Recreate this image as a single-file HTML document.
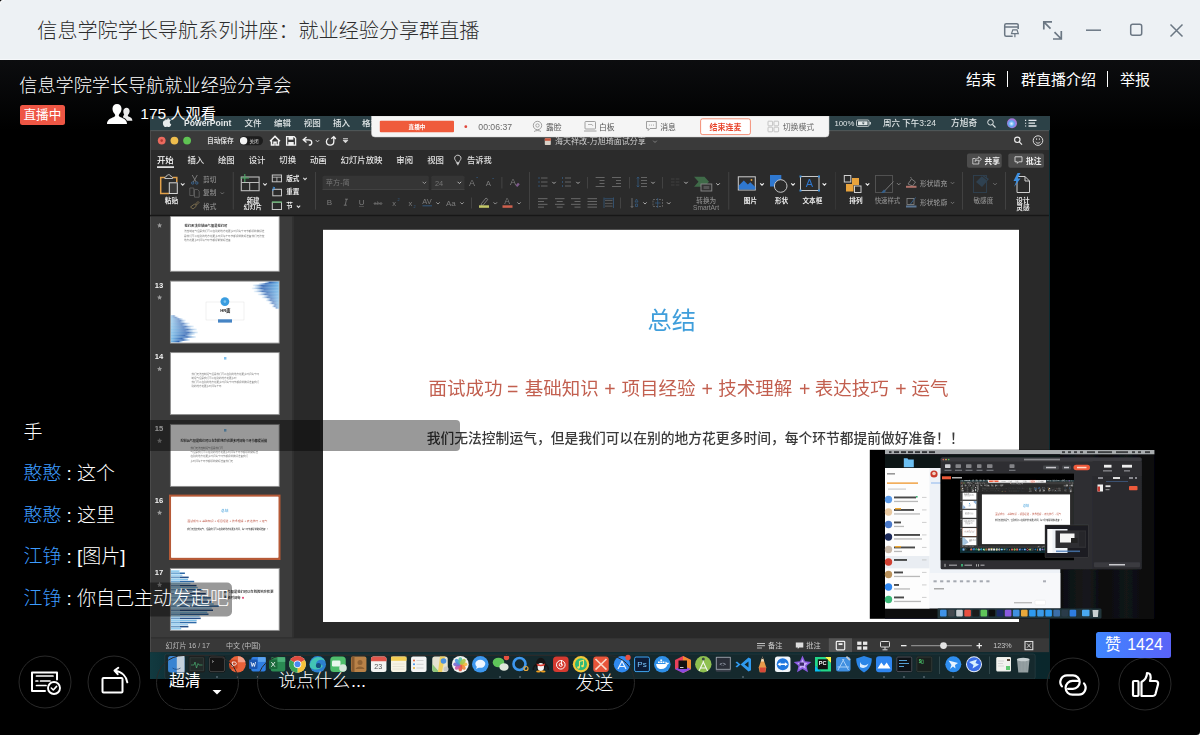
<!DOCTYPE html>
<html lang="zh"><head><meta charset="utf-8"><title>群直播</title>
<style>
html,body{margin:0;padding:0}
body{width:1200px;height:735px;overflow:hidden;position:relative;background:#000;font-family:"Liberation Sans",sans-serif}
#tb{position:absolute;left:0;top:0;width:1200px;height:60px;background:#edf1f4;box-shadow:inset 0 -1px 0 #f6f8fa}
#shade{position:absolute;left:0;top:60px;width:1200px;height:70px;background:linear-gradient(#0c0d0f,#000)}
#video{position:absolute;left:150px;top:116px;width:900px;height:563px;overflow:hidden;background:#0b2a30}
#video svg{display:block;filter:blur(.55px)}
#ui{position:absolute;left:0;top:0}
svg text{font-family:"Liberation Sans","Noto Sans CJK SC",sans-serif}
.sr{position:absolute;left:0;top:0;width:1px;height:1px;overflow:hidden;opacity:0;clip-path:inset(50%);white-space:nowrap;font-size:1px}
</style></head><body>
<div id="tb"></div><div id="shade"></div>
<div class="sr">
<h1>信息学院学长导航系列讲座：就业经验分享群直播</h1>
<h2>信息学院学长导航就业经验分享会</h2>
<p>直播中 · 175 人观看 · 结束 | 群直播介绍 | 举报</p>
<p>总结</p><p>面试成功 = 基础知识 + 项目经验 + 技术理解 + 表达技巧 + 运气</p>
<p>我们无法控制运气，但是我们可以在别的地方花更多时间，每个环节都提前做好准备！！</p>
<ul><li>手</li><li>憨憨 : 这个</li><li>憨憨 : 这里</li><li>江铮 : [图片]</li><li>江铮 : 你自己主动发起吧</li></ul>
<p>超清 · 说点什么... · 发送 · 赞 1424</p>
</div>
<div id="video"><svg width="900" height="563" viewBox="0 0 900 563"><g transform="translate(-150,-116)"><g id="vg"><rect x="150" y="116" width="900" height="563" fill="#0b2a30"/><rect x="150" y="116" width="900" height="14.3" fill="#2c4147"/><path d="M167.200 119.800c.9 0 1.700-.7 1.700-1.900-1 .1-1.800.9-1.700 1.900zM165.300 120.300c-1.400 0-2.400 1.200-2.400 3 0 1.900 1.300 3.800 2.300 3.800.7 0 1-.4 1.900-.4s1.100.4 1.900.4c1 0 1.900-1.500 2.300-2.600-1-.4-1.500-1.200-1.500-2.200 0-.9.500-1.600 1.200-2-.6-.8-1.400-1.100-2.100-1.100-.9 0-1.400.5-1.900.5s-1-.4-1.700-.4z" fill="#e8eced"/>
<text x="184" y="126.48" font-size="8.6" font-weight="700" fill="#e6eaeb">PowerPoint</text>
<text x="244.5" y="126.44" font-size="8.5" font-weight="500" fill="#dfe5e6">文件</text>
<text x="274" y="126.44" font-size="8.5" font-weight="500" fill="#dfe5e6">编辑</text>
<text x="303.7" y="126.44" font-size="8.5" font-weight="500" fill="#dfe5e6">视图</text>
<text x="333" y="126.44" font-size="8.5" font-weight="500" fill="#dfe5e6">插入</text>
<text x="362" y="126.44" font-size="8.5" font-weight="500" fill="#dfe5e6">格式</text>
<text x="834.4" y="126.09" font-size="7.8" font-weight="500" fill="#dfe5e6">100%</text>
<rect x="856.500" y="120" width="12.500" height="6.400" rx="1.200" fill="none" stroke="#dfe5e6" stroke-width=".8"/><rect x="858" y="121.300" width="9.500" height="3.800" fill="#dfe5e6"/><rect x="869.600" y="122" width="1.200" height="2.500" fill="#dfe5e6"/><path d="M863.500 121l-1.500 2.500h1.500l-1 2 2.200-2.800h-1.500z" fill="#2c4147"/>
<text x="883" y="126.34" font-size="8.5" font-weight="500" fill="#dfe5e6">周六 下午3:24</text>
<text x="951" y="126.42" font-size="8.7" font-weight="500" fill="#dfe5e6">方旭奇</text>
<circle cx="990.500" cy="122.300" r="2.800" fill="none" stroke="#dfe5e6" stroke-width="1"/><path d="M992.500 124.500l3 3" stroke="#dfe5e6" stroke-width="1.100"/><defs><radialGradient id="siri" cx=".45" cy=".55" r=".6"><stop offset="0" stop-color="#e9f6ff"/><stop offset=".45" stop-color="#5aa8f0"/><stop offset=".8" stop-color="#b56fd8"/><stop offset="1" stop-color="#7a86c8"/></radialGradient></defs><circle cx="1012" cy="123.200" r="5" fill="url(#siri)"/><path d="M1028.500 120.400h8M1028.500 123.200h6.500M1028.500 126h8" stroke="#e6ecee" stroke-width="1.300"/><path d="M1025 120.400h1.200M1025 123.200h1.200M1025 126h1.200" stroke="#e6ecee" stroke-width="1.100"/><rect x="150" y="130.300" width="899" height="522" fill="#2b2b2b"/><rect x="150" y="130.300" width="899" height="19.700" fill="#3a3a3a"/><rect x="150" y="130.300" width="899" height=".8" fill="#5a6466"/><rect x="150" y="130.300" width="1" height="522" fill="#4a4a4a"/><circle cx="161.700" cy="140.600" r="3.900" fill="#ec6a5e"/><circle cx="161.700" cy="140.600" r="1.300" fill="#b03a30"/><circle cx="174.400" cy="140.600" r="3.900" fill="#f0bd4d"/><circle cx="187.100" cy="140.600" r="3.900" fill="#5fc353"/>
<text x="207" y="143.28" font-size="6.7" font-weight="700" fill="#d8d8d8">自动保存</text>
<rect x="239.400" y="136.200" width="23.600" height="9" rx="4.500" fill="#1c1c1c"/><circle cx="243.600" cy="140.700" r="3.700" fill="#f4f4f4"/>
<text x="249.5" y="142.5" font-size="4.6" font-weight="500" fill="#bbb">关闭</text>
<path d="M270 141.200l5-4.800 5 4.800M271.500 140.500v4.500h2.500v-2.800h2v2.800h2.500v-4.500" fill="none" stroke="#f2f2f2" stroke-width="1.500"/><path d="M286.600 136.700h7.500l1.500 1.500v7h-9z" fill="none" stroke="#f2f2f2" stroke-width="1.300"/><rect x="288.500" y="136.700" width="4.800" height="3" fill="#f2f2f2"/><rect x="288.300" y="142" width="5.400" height="3.200" fill="#f2f2f2"/><path d="M306.500 137l-3.300 2.800 3.300 2.800M303.500 139.800h5c2.200 0 3.300 1.300 3.300 2.700 0 1.500-1.200 2.700-3 2.700" fill="none" stroke="#f2f2f2" stroke-width="1.300"/><path d="M315.8 140.15l1.700 1.700l1.700 -1.700" fill="none" stroke="#ccc" stroke-width="1"/><path d="M333.800 137.200v4.300c0 2.300-1.600 3.700-3.700 3.700s-3.700-1.500-3.700-3.600c0-1.600.9-2.800 2-3.400M331.300 138.800l2.500-2.200 2 2.400" fill="none" stroke="#f2f2f2" stroke-width="1.300"/><path d="M343 138.700h5M343.200 140.300h4.600l-2.300 2.500z" stroke="#ddd" stroke-width=".9" fill="#ddd"/><rect x="544.800" y="138.300" width="6" height="6.800" rx=".8" fill="#d9d2c8"/><rect x="544.800" y="138.300" width="6" height="2.500" fill="#c8553d"/>
<text x="555" y="144.26" font-size="8" fill="#cfcfcf">海天祥改-万旭琦面试分享</text>
<path d="M653.2 140.7l1.8 1.8l1.8 -1.8" fill="none" stroke="#888" stroke-width="0.9"/><circle cx="1017.300" cy="139.800" r="2.700" fill="none" stroke="#eee" stroke-width="1.100"/><path d="M1019.300 141.900l2.700 2.700" stroke="#eee" stroke-width="1.200"/><circle cx="1038" cy="140.600" r="4.800" fill="none" stroke="#ddd" stroke-width="1"/><path d="M1035.700 142c1.200 1.600 3.400 1.600 4.600 0" fill="none" stroke="#ddd" stroke-width=".9"/><path d="M1036.600 138.300v1.600M1039.400 138.300v1.600" stroke="#ddd" stroke-width=".9"/>
<text x="157" y="163.41" font-size="8.4" font-weight="500" fill="#fff">开始</text>
<text x="187.5" y="163.41" font-size="8.4" font-weight="500" fill="#e2e2e2">插入</text>
<text x="218" y="163.41" font-size="8.4" font-weight="500" fill="#e2e2e2">绘图</text>
<text x="248.7" y="163.41" font-size="8.4" font-weight="500" fill="#e2e2e2">设计</text>
<text x="279.3" y="163.41" font-size="8.4" font-weight="500" fill="#e2e2e2">切换</text>
<text x="310" y="163.41" font-size="8.4" font-weight="500" fill="#e2e2e2">动画</text>
<text x="340.6" y="163.41" font-size="8.4" font-weight="500" fill="#e2e2e2">幻灯片放映</text>
<text x="396.3" y="163.41" font-size="8.4" font-weight="500" fill="#e2e2e2">审阅</text>
<text x="427.2" y="163.41" font-size="8.4" font-weight="500" fill="#e2e2e2">视图</text>
<rect x="157" y="166.300" width="17" height="1.600" fill="#f2f2f2"/><path d="M457.800 155.200c1.900 0 3.200 1.400 3.200 3 0 1.200-.7 1.900-1.200 2.600-.4.500-.5 1-.5 1.600h-3c0-.6-.1-1.100-.5-1.600-.5-.7-1.200-1.400-1.200-2.600 0-1.600 1.300-3 3.200-3zM456.500 163.500h2.600M457 164.700h1.600" fill="none" stroke="#ddd" stroke-width=".9"/>
<text x="467" y="163.33" font-size="8.2" font-weight="500" fill="#e2e2e2">告诉我</text>
<rect x="967" y="153.400" width="34.700" height="14.400" rx="2" fill="#4c4c4c"/><rect x="1008.300" y="153.400" width="35.700" height="14.400" rx="2" fill="#4c4c4c"/><path d="M975.500 158.500h-2.700v5.500h6v-2M975 161.500c.3-2 1.500-3.300 3.700-3.300v-1.500l2.800 2.500-2.800 2.500v-1.500c-1.600 0-2.800.3-3.700 1.300z" fill="none" stroke="#ddd" stroke-width=".8"/>
<text x="984.5" y="163.55" font-size="7.7" font-weight="700" fill="#f0f0f0">共享</text>
<path d="M1015 156.800h7v5h-3.300l-1.400 1.600v-1.600h-2.300z" fill="none" stroke="#ddd" stroke-width=".9"/>
<text x="1026" y="163.55" font-size="7.7" font-weight="700" fill="#f0f0f0">批注</text>
<path d="M165 177.500h-4.300v16h8.500M172.500 177.500h4.300v4.500" fill="none" stroke="#e2a14a" stroke-width="1.500"/><path d="M164.800 178.500c0-1.500 1-2.300 2-2.300 0-1 .9-1.500 1.900-1.500s1.900.5 1.900 1.500c1 0 2 .8 2 2.300z" fill="none" stroke="#d0d0d0" stroke-width=".9"/><rect x="169.300" y="182.800" width="8" height="10.700" fill="#3a3a3a" stroke="#d6d6d6" stroke-width="1"/><path d="M180.89999999999998 183.29999999999998l1.8 1.8l1.8 -1.8" fill="none" stroke="#ddd" stroke-width="1.1"/>
<text x="164.8" y="202.74" font-size="6.6" font-weight="700" fill="#ededed">粘贴</text>
<path d="M192.200 175l4 7M197.300 175l-4 7" stroke="#8a8a8a" stroke-width=".8"/><circle cx="192.700" cy="183" r="1.200" fill="none" stroke="#3f6f9f" stroke-width=".8"/><circle cx="196.800" cy="183" r="1.200" fill="none" stroke="#3f6f9f" stroke-width=".8"/>
<text x="203" y="181.68" font-size="6.7" font-weight="500" fill="#8f8f8f">剪切</text>
<path d="M189.800 188h4v7.500h-4zM194.500 189.500h3l1.700 1.700v6h-4.700z" fill="none" stroke="#666" stroke-width=".8"/>
<text x="203" y="195.38" font-size="6.7" font-weight="500" fill="#8f8f8f">复制</text>
<path d="M220.70000000000002 192.39999999999998l1.6 1.6l1.6 -1.6" fill="none" stroke="#777" stroke-width="0.9"/><path d="M190.500 207l4-3 2 2-3.500 3zM195.500 204l2.500-2.500 1 1-2.500 2.500z" fill="none" stroke="#8a7a55" stroke-width=".8"/>
<text x="203" y="209.08" font-size="6.7" font-weight="500" fill="#8f8f8f">格式</text>
<rect x="232.79999999999998" y="172" width=".8" height="37.600" fill="#484848"/><rect x="241.300" y="177" width="17.800" height="13.700" fill="none" stroke="#bdbdbd" stroke-width="1.100"/><path d="M241.300 182.500h17.800M249.700 182.500v8.200" stroke="#bdbdbd" stroke-width="1"/><path d="M244.800 174v8M240.600 178h8.400" stroke="#4aa564" stroke-width="1.100"/><path d="M263.2 183.29999999999998l1.8 1.8l1.8 -1.8" fill="none" stroke="#ddd" stroke-width="1.1"/>
<text x="246.7" y="202.87" font-size="6.4" font-weight="700" fill="#ededed">新建</text>
<text x="243.5" y="209.49" font-size="6.2" font-weight="700" fill="#ededed">幻灯片</text>
<rect x="272.300" y="175" width="9.200" height="6.800" fill="none" stroke="#c8c8c8" stroke-width="1"/><path d="M272.300 177.200h9.200M276.900 177.200v4.600" stroke="#c8c8c8" stroke-width=".8"/>
<text x="286.2" y="181.04" font-size="6.6" font-weight="700" fill="#ededed">版式</text>
<path d="M303.3 177.95000000000002l1.700 1.7l1.7 -1.7" fill="none" stroke="#ddd" stroke-width="1.1"/><rect x="272.800" y="189.300" width="8.700" height="6.500" fill="none" stroke="#c8c8c8" stroke-width="1"/><path d="M274.500 187.500c-1.500.5-2 2-1.500 3.500M274.500 187.500l-.3 1.800M274.500 187.500l-1.700-.3" stroke="#3f8fd8" stroke-width=".9" fill="none"/>
<text x="286.2" y="194.14" font-size="6.6" font-weight="700" fill="#ededed">重置</text>
<rect x="272.300" y="202.300" width="9.200" height="7.200" fill="none" stroke="#c8c8c8" stroke-width="1"/><rect x="272" y="201.400" width="9.800" height="1.300" fill="#5fae6a"/>
<text x="286.2" y="208.44" font-size="6.6" font-weight="700" fill="#ededed">节</text>
<path d="M296.8 205.65l1.7 1.7l1.7 -1.7" fill="none" stroke="#ddd" stroke-width="1.1"/><rect x="315.20000000000005" y="172" width=".8" height="37.600" fill="#484848"/><rect x="322.500" y="175.800" width="106.300" height="13.800" rx="1.500" fill="#353535"/><rect x="322.500" y="189" width="106.300" height=".7" fill="#4a4a4a"/>
<text x="325.8" y="185.46" font-size="7.2" fill="#767676">苹方-简</text>
<path d="M422.59999999999997 181.79999999999998l1.8 1.8l1.8 -1.8" fill="none" stroke="#999" stroke-width="1"/><rect x="431.300" y="175.800" width="33.200" height="13.800" rx="1.500" fill="#353535"/><rect x="431.300" y="189" width="33.200" height=".7" fill="#4a4a4a"/>
<text x="435" y="185.64" font-size="7.4" fill="#767676">24</text>
<path d="M457.59999999999997 181.79999999999998l1.8 1.8l1.8 -1.8" fill="none" stroke="#bbb" stroke-width="1"/>
<text x="469" y="185.83" font-size="9" fill="#7d7d7d">A</text>
<text x="485.8" y="185.89" font-size="7.8" fill="#7d7d7d">A</text>
<path d="M476.300 178l.8-.8.800.8" stroke="#355f88" fill="none" stroke-width=".7"/><path d="M492.300 178l.8.800.800-.8" stroke="#355f88" fill="none" stroke-width=".7"/><rect x="501.500" y="177" width=".8" height="11.500" fill="#4a4a4a"/>
<text x="510" y="185.33" font-size="9" fill="#7d7d7d">A</text>
<path d="M515.500 185.500l2.500-2.800 1.800 1.600-2.500 2.800z" fill="#7d5a8a"/>
<text x="326.8" y="205.26" font-size="8" font-weight="500" fill="#7d7d7d">B</text>
<path d="M346.500 199.200l-1.300 6M345 199.200h3M343.800 205.200h3" stroke="#7d7d7d" stroke-width=".8"/>
<text x="358.7" y="205.26" font-size="8" fill="#7d7d7d">U</text>
<rect x="359" y="206.300" width="5" height=".6" fill="#666"/>
<text x="373.8" y="205.42" font-size="5.2" fill="#6a6a6a">abc</text>
<rect x="373.500" y="203.400" width="9" height=".6" fill="#777"/>
<text x="392.3" y="205.78" font-size="7.5" fill="#7d7d7d">x</text>
<text x="397.4" y="200.91" font-size="3.8" fill="#355f88">2</text>
<text x="408.5" y="205.58" font-size="7.5" fill="#7d7d7d">x</text>
<text x="413.5" y="207.71" font-size="3.8" fill="#355f88">2</text>
<text x="422.3" y="203.58" font-size="7.5" fill="#7d7d7d">AV</text>
<path d="M422.500 205.800h9.500" stroke="#355f88" stroke-width=".9"/><path d="M436.3 202.35l1.7 1.7l1.7 -1.7" fill="none" stroke="#999" stroke-width="1"/>
<text x="446" y="205.96" font-size="8" fill="#7d7d7d">Aa</text>
<path d="M460.3 202.35l1.7 1.7l1.7 -1.7" fill="none" stroke="#999" stroke-width="1"/><rect x="471.200" y="197.500" width=".8" height="11" fill="#4a4a4a"/><path d="M481.500 203.500l4.500-5.500 1.800 1.400-4.500 5.500-2.300.600z" fill="none" stroke="#8a8a8a" stroke-width=".8"/><rect x="479" y="205.300" width="10" height="2.500" fill="#c4c868"/><path d="M493.6 202.35l1.7 1.7l1.7 -1.7" fill="none" stroke="#999" stroke-width="1"/>
<text x="504.3" y="203.98" font-size="8.6" fill="#7d7d7d">A</text>
<rect x="502.500" y="205.300" width="10" height="2.500" fill="#cf614e"/><path d="M517.3 202.35l1.7 1.7l1.7 -1.7" fill="none" stroke="#999" stroke-width="1"/><rect x="529.0" y="172" width=".8" height="37.600" fill="#484848"/><rect x="541" y="177.55" width="6.5" height="0.9" fill="#6c6c6c"/><rect x="541" y="181.55" width="6.5" height="0.9" fill="#6c6c6c"/><rect x="541" y="185.55" width="6.5" height="0.9" fill="#6c6c6c"/><circle cx="539" cy="178" r=".7" fill="#355f88"/><circle cx="539" cy="182" r=".7" fill="#355f88"/><circle cx="539" cy="186" r=".7" fill="#355f88"/><path d="M552.3 181.85l1.7 1.7l1.7 -1.7" fill="none" stroke="#aaa" stroke-width="1"/><rect x="565" y="177.55" width="6" height="0.9" fill="#6c6c6c"/><rect x="565" y="181.55" width="6" height="0.9" fill="#6c6c6c"/><rect x="565" y="185.55" width="6" height="0.9" fill="#6c6c6c"/><rect x="562" y="177" width=".7" height="2" fill="#355f88"/><rect x="562" y="181" width=".7" height="2" fill="#355f88"/><rect x="562" y="185" width=".7" height="2" fill="#355f88"/><path d="M576.3 181.85l1.7 1.7l1.7 -1.7" fill="none" stroke="#aaa" stroke-width="1"/><rect x="587.100" y="177" width=".8" height="11.500" fill="#4a4a4a"/><rect x="595.6" y="177.05" width="9" height="0.9" fill="#6c6c6c"/><rect x="599.5" y="180.05" width="5" height="0.9" fill="#6c6c6c"/><rect x="599.5" y="183.05" width="5" height="0.9" fill="#6c6c6c"/><rect x="595.6" y="186.05" width="9" height="0.9" fill="#6c6c6c"/><rect x="612" y="177.05" width="9" height="0.9" fill="#6c6c6c"/><rect x="616" y="180.05" width="5" height="0.9" fill="#6c6c6c"/><rect x="616" y="183.05" width="5" height="0.9" fill="#6c6c6c"/><rect x="612" y="186.05" width="9" height="0.9" fill="#6c6c6c"/><rect x="629" y="177" width=".8" height="11.500" fill="#4a4a4a"/><rect x="641" y="177.05" width="6" height="0.9" fill="#6c6c6c"/><rect x="641" y="180.05" width="6" height="0.9" fill="#6c6c6c"/><rect x="641" y="183.05" width="6" height="0.9" fill="#6c6c6c"/><rect x="641" y="186.05" width="6" height="0.9" fill="#6c6c6c"/><path d="M638 177v10M636.800 178.500l1.200-1.500 1.200 1.500M636.800 185.500l1.200 1.500 1.200-1.500" stroke="#355f88" stroke-width=".7" fill="none"/><path d="M651.3 181.85l1.7 1.7l1.7 -1.7" fill="none" stroke="#aaa" stroke-width="1"/><rect x="662.100" y="177" width=".8" height="11.500" fill="#4a4a4a"/><rect x="671" y="178.55" width="3.5" height="0.9" fill="#444"/><rect x="671" y="181.55" width="3.5" height="0.9" fill="#444"/><rect x="671" y="184.55" width="3.5" height="0.9" fill="#444"/><rect x="675.8" y="178.55" width="3.5" height="0.9" fill="#444"/><rect x="675.8" y="181.55" width="3.5" height="0.9" fill="#444"/><rect x="675.8" y="184.55" width="3.5" height="0.9" fill="#444"/><path d="M684.3 181.85l1.7 1.7l1.7 -1.7" fill="none" stroke="#bbb" stroke-width="1"/><rect x="538" y="198.25" width="9.5" height="0.9" fill="#707070"/><rect x="538" y="201.05" width="6" height="0.9" fill="#707070"/><rect x="538" y="203.85" width="9.5" height="0.9" fill="#707070"/><rect x="538" y="206.65" width="6" height="0.9" fill="#707070"/><rect x="555" y="198.25" width="9.5" height="0.9" fill="#707070"/><rect x="556.700" y="201.05" width="6" height="0.9" fill="#707070"/><rect x="555" y="203.85" width="9.5" height="0.9" fill="#707070"/><rect x="556.700" y="206.65" width="6" height="0.9" fill="#707070"/><rect x="571" y="198.25" width="9.5" height="0.9" fill="#707070"/><rect x="571" y="201.05" width="6" transform="translate(3.500,0)" height="0.9" fill="#707070"/><rect x="571" y="203.85" width="9.5" height="0.9" fill="#707070"/><rect x="571" y="206.65" width="6" transform="translate(3.500,0)" height="0.9" fill="#707070"/><rect x="587.5" y="198.25" width="9.5" height="0.9" fill="#707070"/><rect x="587.5" y="201.05" width="9.5" height="0.9" fill="#707070"/><rect x="587.5" y="203.85" width="9.5" height="0.9" fill="#707070"/><rect x="587.5" y="206.65" width="9.5" height="0.9" fill="#707070"/><rect x="605" y="200.10" width="7.5" height="0.8" fill="#666"/><rect x="605" y="202.90" width="7.5" height="0.8" fill="#666"/><rect x="605" y="205.70" width="7.5" height="0.8" fill="#666"/><path d="M604 197.500v10.500M613.500 197.500v10.500M604.500 198.800h8.500" stroke="#355f88" stroke-width=".7"/><rect x="620.200" y="197.500" width=".8" height="11" fill="#4a4a4a"/><path d="M632 198v9.500M630.700 206l1.300 1.500 1.300-1.500" stroke="#7a7a7a" stroke-width=".8" fill="none"/><path d="M636.500 199l-1.500 3h3zM635.500 204h2v2.500h-2z" fill="none" stroke="#355f88" stroke-width=".7"/><path d="M643.3 202.35l1.7 1.7l1.7 -1.7" fill="none" stroke="#aaa" stroke-width="1"/><rect x="653" y="199.500" width="9.500" height="7" fill="none" stroke="#6c6c6c" stroke-width=".8" stroke-dasharray="2 1"/><path d="M657.700 198v10M655 203h5.500" stroke="#355f88" stroke-width=".7"/><path d="M667.0 202.35l1.7 1.7l1.7 -1.7" fill="none" stroke="#aaa" stroke-width="1"/><path d="M694 176.800h10.500l4.500 5-4.500 5h-10.500l4.500-5z" fill="#3f6a48"/><rect x="701" y="184" width="10.800" height="7" fill="#333" stroke="#8a8a8a" stroke-width=".9"/><rect x="703.500" y="186" width="5.800" height="3" fill="#555"/><path d="M716.2 183.29999999999998l1.8 1.8l1.8 -1.8" fill="none" stroke="#bbb" stroke-width="1"/>
<text x="696.3" y="202.94" font-size="6.6" font-weight="500" fill="#8c8c8c">转换为</text>
<text x="693" y="209.64" font-size="6.6" font-weight="500" fill="#8c8c8c">SmartArt</text>
<rect x="728.4" y="172" width=".8" height="37.600" fill="#484848"/><rect x="738.300" y="176.800" width="17" height="13.200" fill="#2f2f2f" stroke="#cfcfcf" stroke-width="1"/><path d="M738.800 189.500v-4l5-5 4 4 2.500-2.200 5 4.700v2.500z" fill="#2f78d0"/><circle cx="751.500" cy="180" r=".9" fill="#e8a33d"/><path d="M760.2 183.29999999999998l1.8 1.8l1.8 -1.8" fill="none" stroke="#eee" stroke-width="1.2"/>
<text x="743.8" y="202.74" font-size="6.6" font-weight="700" fill="#ededed">图片</text>
<rect x="770" y="175" width="11.300" height="11.500" fill="#2f78d0"/><circle cx="780.700" cy="186" r="6.300" fill="#2b2b2b" stroke="#c8c8c8" stroke-width="1"/><path d="M791.2 183.29999999999998l1.8 1.8l1.8 -1.8" fill="none" stroke="#eee" stroke-width="1.2"/>
<text x="775" y="202.74" font-size="6.6" font-weight="700" fill="#ededed">形状</text>
<rect x="800.500" y="176.500" width="18.500" height="14" fill="none" stroke="#c8c8c8" stroke-width="1"/><rect x="799.5" y="175.5" width="2" height="2" fill="#3f8fd8"/><rect x="818" y="175.5" width="2" height="2" fill="#3f8fd8"/><rect x="799.5" y="189.5" width="2" height="2" fill="#3f8fd8"/><rect x="818" y="189.5" width="2" height="2" fill="#3f8fd8"/>
<text x="805.8" y="187.37" font-size="11" fill="#2f78d0">A</text>
<path d="M822.6 183.29999999999998l1.8 1.8l1.8 -1.8" fill="none" stroke="#eee" stroke-width="1.2"/>
<text x="802.5" y="202.74" font-size="6.6" font-weight="700" fill="#ededed">文本框</text>
<rect x="835.1" y="172" width=".8" height="37.600" fill="#3a3a3a"/><rect x="844.300" y="175.500" width="6.500" height="6.500" fill="#2b2b2b" stroke="#cfcfcf" stroke-width="1"/><rect x="852" y="178" width="7" height="7" fill="#e8a33d"/><rect x="846" y="184" width="7.500" height="7.500" fill="#e8a33d"/><rect x="854.500" y="186" width="6.500" height="6.500" fill="#2b2b2b" stroke="#cfcfcf" stroke-width="1"/><path d="M865.7 183.29999999999998l1.8 1.8l1.8 -1.8" fill="none" stroke="#eee" stroke-width="1.2"/>
<text x="849.3" y="202.74" font-size="6.6" font-weight="700" fill="#ededed">排列</text>
<rect x="875.500" y="175.500" width="17" height="17" fill="none" stroke="#555" stroke-width=".9"/><path d="M893.500 181.500l-9 9.500" stroke="#777" stroke-width="1"/><path d="M881 193l3-3.500 2 1.500-2 2z" fill="#355f88"/><path d="M897.0 183.15l1.7 1.7l1.7 -1.7" fill="none" stroke="#888" stroke-width="1"/>
<text x="874.7" y="202.67" font-size="6.4" font-weight="500" fill="#8c8c8c">快速样式</text>
<path d="M908 184l3.500-5 4 3-3 4zM911.500 178.500l-1-1.500" fill="none" stroke="#8a8a8a" stroke-width=".8"/><rect x="906" y="185.800" width="10.500" height="2" fill="#b0726a"/>
<text x="920" y="185.52" font-size="6.8" font-weight="500" fill="#909090">形状填充</text>
<path d="M950.8 182.15l1.7 1.7l1.7 -1.7" fill="none" stroke="#777" stroke-width="0.9"/><rect x="907" y="198.500" width="7" height="6" fill="none" stroke="#8a8a8a" stroke-width=".8"/><path d="M910.500 204l5-6.500" stroke="#355f88" stroke-width="1"/><rect x="906" y="205.500" width="10.500" height="2" fill="#5b7694"/>
<text x="920" y="205.32" font-size="6.8" font-weight="500" fill="#909090">形状轮廓</text>
<path d="M950.8 201.95000000000002l1.7 1.7l1.7 -1.7" fill="none" stroke="#777" stroke-width="0.9"/><rect x="962.2" y="172" width=".8" height="37.600" fill="#484848"/><rect x="973.500" y="175.500" width="13" height="17" fill="none" stroke="#2f4150" stroke-width=".9"/><path d="M976 182l7-7 6 4-7 8z" fill="#2f4150"/><path d="M982 176l5 4" stroke="#2b2b2b" stroke-width=".9"/><path d="M993.3 183.15l1.7 1.7l1.7 -1.7" fill="none" stroke="#777" stroke-width="0.9"/>
<text x="973.5" y="203.24" font-size="6.6" font-weight="500" fill="#8c8c8c">敏感度</text>
<rect x="1005.1" y="172" width=".8" height="37.600" fill="#484848"/><path d="M1017 176.500h8l4.500 4.500v11.500h-12.500z" fill="#2b2b2b" stroke="#cfcfcf" stroke-width="1"/><path d="M1025 176.500v4.500h4.500" fill="none" stroke="#cfcfcf" stroke-width="1"/><path d="M1017.500 173l-4 8h3l-2.500 6 6.500-8.500h-3l3-5.500z" fill="#3d8fe0"/>
<text x="1016.3" y="202.74" font-size="6.6" font-weight="700" fill="#ededed">设计</text>
<text x="1016.3" y="209.64" font-size="6.6" font-weight="700" fill="#ededed">灵感</text>
<rect x="150" y="214.800" width="899" height="1.600" fill="#171717"/><rect x="151" y="216.400" width="142" height="421.400" fill="#3b3b3b"/><rect x="292.600" y="216.400" width="756.400" height="421.400" fill="#292929"/><rect x="292.600" y="216.400" width="1.400" height="421.400" fill="#303030"/><clipPath id="pc"><rect x="151" y="216.400" width="142" height="421.400"/></clipPath><g clip-path="url(#pc)"><rect x="170.400" y="209.3" width="108.800" height="62" fill="#fff" stroke="#8e8e8e" stroke-width=".9"/><path d="M0 -2.600l.75 1.700 1.850.2-1.400 1.250.4 1.850-1.600-.95-1.600.95.400-1.850-1.400-1.250 1.850-.2z" transform="translate(159.600,225.300)" fill="#9a9a9a"/>
<text x="184.5" y="226.92" font-size="3.3" font-weight="700" fill="#222" opacity="0.9">我们无法控制运气但是我们可</text>
<text x="184" y="232.46" font-size="2.6" fill="#444" opacity="0.7">法控制运气但是我们可以在别的地方花更多时间每个环节都提前做好准</text>
<text x="184" y="236.66" font-size="2.6" fill="#444" opacity="0.7">是我们可以在别的地方花更多时间每个环节都提前做好准备我们无法控</text>
<text x="184" y="240.76" font-size="2.6" fill="#444" opacity="0.7">地方花更多时间每个环节都提前做好准备</text>
<rect x="170.400" y="281.1" width="108.800" height="62" fill="#fff" stroke="#8e8e8e" stroke-width=".9"/>
<text x="154.8" y="287.61" font-size="7.6" font-weight="700" fill="#f4f4f4">13</text>
<path d="M0 -2.600l.75 1.700 1.850.2-1.400 1.250.4 1.850-1.600-.95-1.600.95.400-1.850-1.400-1.250 1.850-.2z" transform="translate(159.600,297.40000000000003)" fill="#9a9a9a"/><defs><linearGradient id="wc1" x1="0" x2="1"><stop offset="0" stop-color="#8fc4ea" stop-opacity=".2"/><stop offset=".35" stop-color="#2a5fb0"/><stop offset="1" stop-color="#6db7e8"/></linearGradient><linearGradient id="wc2" x1="1" x2="0"><stop offset="0" stop-color="#8fc4ea" stop-opacity=".3"/><stop offset=".35" stop-color="#2a5fb0"/><stop offset="1" stop-color="#7cc0ea"/></linearGradient></defs><rect x="264.8" y="281.6" width="14" height="1.600" fill="url(#wc1)" opacity="0.95"/><rect x="258.8" y="283.1" width="20" height="1.600" fill="url(#wc1)" opacity="0.92"/><rect x="252.8" y="284.6" width="26" height="1.600" fill="url(#wc1)" opacity="0.90"/><rect x="254.8" y="286.1" width="24" height="1.600" fill="url(#wc1)" opacity="0.88"/><rect x="251.8" y="287.6" width="27" height="1.600" fill="url(#wc1)" opacity="0.85"/><rect x="256.8" y="289.1" width="22" height="1.600" fill="url(#wc1)" opacity="0.82"/><rect x="253.8" y="290.6" width="25" height="1.600" fill="url(#wc1)" opacity="0.80"/><rect x="260.8" y="292.1" width="18" height="1.600" fill="url(#wc1)" opacity="0.77"/><rect x="257.8" y="293.6" width="21" height="1.600" fill="url(#wc1)" opacity="0.75"/><rect x="263.8" y="295.1" width="15" height="1.600" fill="url(#wc1)" opacity="0.72"/><rect x="261.8" y="296.6" width="17" height="1.600" fill="url(#wc1)" opacity="0.70"/><rect x="266.8" y="298.1" width="12" height="1.600" fill="url(#wc1)" opacity="0.67"/><rect x="265.8" y="299.6" width="13" height="1.600" fill="url(#wc1)" opacity="0.65"/><rect x="269.8" y="301.1" width="9" height="1.600" fill="url(#wc1)" opacity="0.62"/><rect x="268.8" y="302.6" width="10" height="1.600" fill="url(#wc1)" opacity="0.60"/><rect x="272.8" y="304.1" width="6" height="1.600" fill="url(#wc1)" opacity="0.57"/><rect x="271.8" y="305.6" width="7" height="1.600" fill="url(#wc1)" opacity="0.55"/><rect x="274.8" y="307.1" width="4" height="1.600" fill="url(#wc1)" opacity="0.52"/><rect x="170.800" y="315.2" width="5" height="1.600" fill="url(#wc2)" opacity="0.55"/><rect x="170.800" y="316.7" width="8" height="1.600" fill="url(#wc2)" opacity="0.58"/><rect x="170.800" y="318.2" width="12" height="1.600" fill="url(#wc2)" opacity="0.60"/><rect x="170.800" y="319.7" width="15" height="1.600" fill="url(#wc2)" opacity="0.62"/><rect x="170.800" y="321.2" width="14" height="1.600" fill="url(#wc2)" opacity="0.65"/><rect x="170.800" y="322.7" width="19" height="1.600" fill="url(#wc2)" opacity="0.68"/><rect x="170.800" y="324.2" width="17" height="1.600" fill="url(#wc2)" opacity="0.70"/><rect x="170.800" y="325.7" width="23" height="1.600" fill="url(#wc2)" opacity="0.73"/><rect x="170.800" y="327.2" width="20" height="1.600" fill="url(#wc2)" opacity="0.75"/><rect x="170.800" y="328.7" width="26" height="1.600" fill="url(#wc2)" opacity="0.78"/><rect x="170.800" y="330.2" width="22" height="1.600" fill="url(#wc2)" opacity="0.80"/><rect x="170.800" y="331.7" width="27" height="1.600" fill="url(#wc2)" opacity="0.83"/><rect x="170.800" y="333.2" width="24" height="1.600" fill="url(#wc2)" opacity="0.85"/><rect x="170.800" y="334.7" width="21" height="1.600" fill="url(#wc2)" opacity="0.88"/><rect x="170.800" y="336.2" width="25" height="1.600" fill="url(#wc2)" opacity="0.90"/><rect x="170.800" y="337.7" width="17" height="1.600" fill="url(#wc2)" opacity="0.93"/><rect x="170.800" y="339.2" width="19" height="1.600" fill="url(#wc2)" opacity="0.95"/><rect x="170.800" y="340.7" width="12" height="1.600" fill="url(#wc2)" opacity="0.98"/><rect x="206" y="302" width="38" height="18" fill="#fff" stroke="#e2e2e2" stroke-width=".5"/><circle cx="224.900" cy="301.600" r="4.400" fill="#3a9de0"/><circle cx="224.900" cy="301.600" r="1.300" fill="#7cc4f0"/>
<text x="220.3" y="311.75" font-size="4.2" font-weight="700" fill="#222">HR面</text>
<rect x="218" y="319.300" width="14" height="3.300" fill="#4584c4"/><rect x="170.400" y="352.6" width="108.800" height="62" fill="#fff" stroke="#8e8e8e" stroke-width=".9"/>
<text x="154.8" y="359.11" font-size="7.6" font-weight="700" fill="#f4f4f4">14</text>
<path d="M0 -2.600l.75 1.700 1.850.2-1.400 1.250.4 1.850-1.600-.95-1.600.95.400-1.850-1.400-1.250 1.850-.2z" transform="translate(159.600,368.90000000000003)" fill="#9a9a9a"/><rect x="224" y="357" width="2.400" height="2.600" fill="#5fb0e8" opacity=".8"/>
<text x="191.5" y="375.23" font-size="2.5" fill="#444" opacity="0.7">我们无法控制运气但是我们可以在别的地方花更多时间每个环</text>
<text x="191.5" y="379.23" font-size="2.5" fill="#444" opacity="0.7">制运气但是我们可以在别的地方花更多时</text>
<text x="191.5" y="383.23" font-size="2.5" fill="#444" opacity="0.7">我们可以在别的地方花更多时间每个环节都提前做好准备我们</text>
<text x="191.5" y="387.23" font-size="2.5" fill="#444" opacity="0.7">别的地方花更多时间每个环</text>
<rect x="170.400" y="424.4" width="108.800" height="62" fill="#fff" stroke="#8e8e8e" stroke-width=".9"/>
<text x="154.8" y="430.91" font-size="7.6" font-weight="700" fill="#f4f4f4">15</text>
<path d="M0 -2.600l.75 1.700 1.850.2-1.400 1.250.4 1.850-1.600-.95-1.600.95.400-1.850-1.400-1.250 1.850-.2z" transform="translate(159.600,440.7)" fill="#9a9a9a"/><rect x="224" y="429" width="2.400" height="2.600" fill="#5fb0e8" opacity=".8"/>
<text x="180.5" y="442.45" font-size="3.1" font-weight="700" fill="#222" opacity="0.9">控制运气但是我们可以在别的地方花更多时间每个环节都提前做</text>
<text x="190.5" y="449.23" font-size="2.5" fill="#444" opacity="0.7">我们无法控制运气但是我们可</text>
<text x="190.5" y="453.33" font-size="2.5" fill="#444" opacity="0.7">气但是我们可以在别的地方花更多时间每个环节都提前做好准</text>
<text x="190.5" y="457.43" font-size="2.5" fill="#444" opacity="0.7">在别的地方花更多时间每个环节都提前做好准备我们</text>
<text x="190.5" y="461.53" font-size="2.5" fill="#444" opacity="0.7">多时间每个环节都提前做好准备我们无</text>
<rect x="169" y="494.6" width="111.500" height="65.400" fill="#b65a37"/><rect x="171.200" y="496.8" width="107.100" height="61" fill="#fff"/>
<text x="154.8" y="502.81" font-size="7.6" font-weight="700" fill="#f4f4f4">16</text>
<path d="M0 -2.600l.75 1.700 1.850.2-1.400 1.250.4 1.850-1.600-.95-1.600.95.400-1.850-1.400-1.250 1.850-.2z" transform="translate(159.600,512.6)" fill="#9a9a9a"/><use href="#sl" transform="translate(171.200,496.800) scale(.15388)"/><rect x="170.400" y="568.4" width="108.800" height="62" fill="#fff" stroke="#8e8e8e" stroke-width=".9"/>
<text x="154.8" y="574.91" font-size="7.6" font-weight="700" fill="#f4f4f4">17</text>
<path d="M0 -2.600l.75 1.700 1.850.2-1.400 1.250.4 1.850-1.600-.95-1.600.95.400-1.850-1.400-1.250 1.850-.2z" transform="translate(159.600,584.6999999999999)" fill="#9a9a9a"/><rect x="171" y="570.5" width="8.0" height="1.500" fill="#7fc0e8"/><rect x="171" y="572.5" width="13.9" height="1.500" fill="#2f6aa8"/><rect x="171" y="574.6" width="11.4" height="1.500" fill="#9fd0f0"/><rect x="171" y="576.6" width="17.7" height="1.500" fill="#274f88"/><rect x="171" y="578.7" width="17.0" height="1.500" fill="#7fc0e8"/><rect x="171" y="580.8" width="23.2" height="1.500" fill="#2f6aa8"/><rect x="171" y="582.8" width="19.4" height="1.500" fill="#9fd0f0"/><rect x="171" y="584.9" width="25.5" height="1.500" fill="#274f88"/><rect x="171" y="586.9" width="26.7" height="1.500" fill="#7fc0e8"/><rect x="171" y="589.0" width="31.7" height="1.500" fill="#2f6aa8"/><rect x="171" y="591.0" width="28.8" height="1.500" fill="#9fd0f0"/><rect x="171" y="593.0" width="34.8" height="1.500" fill="#274f88"/><rect x="171" y="595.1" width="33.9" height="1.500" fill="#7fc0e8"/><rect x="171" y="597.1" width="39.9" height="1.500" fill="#2f6aa8"/><rect x="171" y="599.2" width="35.9" height="1.500" fill="#9fd0f0"/><rect x="171" y="601.2" width="41.8" height="1.500" fill="#274f88"/><rect x="171" y="603.3" width="42.8" height="1.500" fill="#7fc0e8"/><rect x="171" y="605.4" width="47.8" height="1.500" fill="#2f6aa8"/><rect x="171" y="607.4" width="40.7" height="1.500" fill="#9fd0f0"/><rect x="171" y="609.5" width="42.0" height="1.500" fill="#274f88"/><rect x="171" y="611.5" width="36.3" height="1.500" fill="#7fc0e8"/><rect x="171" y="613.5" width="37.5" height="1.500" fill="#2f6aa8"/><rect x="171" y="615.6" width="28.7" height="1.500" fill="#9fd0f0"/><rect x="171" y="617.6" width="29.7" height="1.500" fill="#274f88"/><rect x="171" y="619.7" width="25.7" height="1.500" fill="#7fc0e8"/><rect x="171" y="621.8" width="25.5" height="1.500" fill="#2f6aa8"/><rect x="171" y="623.8" width="17.1" height="1.500" fill="#9fd0f0"/><rect x="171" y="625.9" width="17.4" height="1.500" fill="#274f88"/><rect x="171" y="627.9" width="10.2" height="1.500" fill="#7fc0e8"/><rect x="171" y="570" width="9" height="59.500" fill="#a8d8f4" opacity=".55"/>
<text x="224" y="592.92" font-size="3.3" font-weight="700" fill="#222" opacity="0.9">运气但是我们可以在别的地方花更</text>
<text x="224" y="599.02" font-size="3.3" font-weight="700" fill="#222" opacity="0.9">更多时间每</text>
<circle cx="243" cy="597.800" r="1.100" fill="#e0507a"/></g><defs><g id="sl"><rect x="0" y="0" width="696" height="392.200" fill="#fff"/>
<text x="324.5" y="99.35" font-size="24.2" fill="#3f9edb">总结</text>
<text x="105.5" y="165.44" font-size="18.5" fill="#c25f4f">面试成功</text>
<text x="201.8" y="165.44" font-size="18.5" fill="#c25f4f">基础知识</text>
<text x="298.5" y="165.44" font-size="18.5" fill="#c25f4f">项目经验</text>
<text x="395.2" y="165.44" font-size="18.5" fill="#c25f4f">技术理解</text>
<text x="491.8" y="165.44" font-size="18.5" fill="#c25f4f">表达技巧</text>
<text x="588.5" y="165.44" font-size="18.5" fill="#c25f4f">运气</text>
<text x="184" y="165.79" font-size="19.43" fill="#c25f4f">=</text>
<text x="281.3" y="165.79" font-size="19.43" fill="#c25f4f">+</text>
<text x="378.5" y="165.79" font-size="19.43" fill="#c25f4f">+</text>
<text x="476" y="165.79" font-size="19.43" fill="#c25f4f">+</text>
<text x="572.3" y="165.79" font-size="19.43" fill="#c25f4f">+</text>
<text x="103.8" y="213.5" font-size="13.78" font-weight="500" fill="#3a3a3a">我们无法控制运气，但是我们可以在别的地方花更多时间，每个环节都提前做好准备！！</text>
</g></defs><use href="#sl" transform="translate(323,229.800)"/><rect x="151" y="637.800" width="898" height="14.500" fill="#383838"/><rect x="151" y="637.600" width="898" height=".7" fill="#2a2a2a"/>
<text x="165.5" y="648.39" font-size="7" fill="#bdbdbd">幻灯片 16 / 17</text>
<text x="226" y="648.39" font-size="7" fill="#bdbdbd">中文 (中国)</text>
<path d="M757 643.500h8M757 645.700h8M757 648h5" stroke="#ccc" stroke-width=".9"/>
<text x="768" y="648.46" font-size="7.2" fill="#d0d0d0">备注</text>
<path d="M795.800 642.500h7.500v5h-4l-1.500 1.500v-1.500h-2z" fill="#ddd"/>
<text x="806.2" y="648.46" font-size="7.2" fill="#d0d0d0">批注</text>
<rect x="828.800" y="638.300" width="23.200" height="14" fill="#555"/><rect x="836.300" y="641.300" width="8.400" height="8.600" rx=".8" fill="none" stroke="#f0f0f0" stroke-width="1.200"/><rect x="838.500" y="643.200" width="4" height="1.800" fill="#f0f0f0"/><rect x="857.2" y="641.6" width="4.300" height="3.300" fill="#e8e8e8"/><rect x="857.2" y="646.4" width="4.300" height="3.300" fill="#e8e8e8"/><rect x="863.0" y="641.6" width="4.300" height="3.300" fill="#e8e8e8"/><rect x="863.0" y="646.4" width="4.300" height="3.300" fill="#e8e8e8"/><rect x="880.500" y="641.500" width="9" height="5.500" rx=".8" fill="none" stroke="#ddd" stroke-width="1"/><path d="M885 647v2.500M882.500 649.800h5" stroke="#ddd" stroke-width="1"/><rect x="901" y="645" width="5.500" height="1.300" fill="#eee"/><rect x="911" y="645" width="61" height="1.300" rx=".6" fill="#8a8a8a"/><circle cx="943.500" cy="645.600" r="3.400" fill="#e4e4e4"/><path d="M976.500 645.600h5.500M979.300 642.900v5.500" stroke="#eee" stroke-width="1.300"/>
<text x="993.3" y="648.46" font-size="7.2" fill="#c8c8c8">123%</text>
<rect x="1025" y="641.500" width="7.800" height="8.200" fill="none" stroke="#ddd" stroke-width="1.100"/><path d="M1027 643.500l3.800 4.200M1030.800 643.500l-3.800 4.200" stroke="#ddd" stroke-width=".9"/><defs><linearGradient id="dsk" x1="0" x2="1"><stop offset="0" stop-color="#123a40"/><stop offset=".04" stop-color="#0b2a30"/><stop offset=".95" stop-color="#0a272d"/><stop offset="1" stop-color="#0a272c"/></linearGradient></defs><rect x="150" y="652.300" width="900" height="26.700" fill="url(#dsk)"/><rect x="164.800" y="654" width="870.400" height="25" rx="2" fill="#15292d" stroke="#2e4246" stroke-width=".6"/><rect x="168.050" y="656.050" width="16.500" height="16.500" rx="2.500" fill="#3a84d2"/><path d="M176.800 656v16.500h7.700v-16.500z" fill="#c4d0dc"/><path d="M172.500 668c2.500 1.800 5.500 1.800 8 0" stroke="#1d3f70" stroke-width=".7" fill="none"/><rect x="188.550" y="656.050" width="16.500" height="16.500" rx="2" fill="#1d1f1f"/><rect x="190" y="657.800" width="13.600" height="13" fill="#222a28" stroke="#3a4644" stroke-width=".6"/><path d="M191 665h3l1-3 1.500 6 1.500-4.500 1 1.500h3.500" stroke="#4fbf7a" stroke-width=".6" fill="none"/><rect x="208.750" y="656.050" width="16.500" height="16.500" rx="2" fill="#111"/><rect x="209.500" y="657" width="15" height="14.600" rx="1.500" fill="#151515" stroke="#555" stroke-width=".7"/><path d="M212 660.500l1.500 1-1.500 1" stroke="#ddd" stroke-width=".6" fill="none"/><circle cx="217" cy="677" r=".7" fill="#9ab"/><circle cx="237.500" cy="664.300" r="8.300" fill="#e8623a"/><rect x="229.500" y="659.800" width="8" height="9" rx="1" fill="#c8421f"/><path d="M232.300 667v-5h2.200c1.100 0 1.800.7 1.800 1.600s-.7 1.600-1.800 1.600h-2.200" stroke="#fff" stroke-width=".9" fill="none"/><path d="M238 656.200a8.200 8.200 0 0 1 7.600 6h-7.600z" fill="#f4a088"/><circle cx="237.500" cy="677" r=".7" fill="#9ab"/><rect x="251.250" y="657.050" width="14.500" height="14.500" rx="2" fill="#2f7de0"/><rect x="249" y="659.500" width="8.500" height="9.500" rx="1" fill="#1c57b0"/><path d="M251 662l1.200 4.500 1.100-3.500 1.100 3.500 1.200-4.500" stroke="#fff" stroke-width=".8" fill="none"/><rect x="258" y="657.200" width="7.700" height="4.700" fill="#5ba4f0"/><circle cx="257.500" cy="677" r=".7" fill="#9ab"/><rect x="270.750" y="657.050" width="14.500" height="14.500" rx="2" fill="#2a8a52"/><rect x="269" y="659.500" width="8.500" height="9.500" rx="1" fill="#1c6a3c"/><path d="M271.300 662l3.700 4.800M275 662l-3.700 4.800" stroke="#fff" stroke-width=".8"/><rect x="277.500" y="657.200" width="7.700" height="4.700" fill="#4cb078"/><circle cx="297.500" cy="664.300" r="8.400" fill="#e8e8e8"/><path d="M297.500 664.300l-7.270-4.200a8.400 8.400 0 0 1 14.540 0z" fill="#dd4b3e"/><path d="M297.500 664.300l7.270-4.200a8.400 8.400 0 0 1-7.270 12.600z" fill="#f5c33b"/><path d="M297.500 664.300v8.400a8.400 8.400 0 0 1-7.270-12.600z" fill="#3aa757"/><circle cx="297.500" cy="664.300" r="3.800" fill="#fff"/><circle cx="297.500" cy="664.300" r="3" fill="#4a8af0"/><circle cx="317.700" cy="664.300" r="8.300" fill="#2c7fd0"/><path d="M310 667a8.300 8.300 0 0 1 15.500-5.500c-3-3-9-2-9.500 2.500 3 0 6 .2 6.800 2-2 4-9 5-12.800 1z" fill="#46d0b0" opacity=".85"/><circle cx="318.500" cy="665.500" r="2.600" fill="#15507f"/><rect x="330.250" y="656.550" width="15.500" height="15.500" rx="3.500" fill="#4fbe6c"/><rect x="332" y="660.500" width="8.500" height="6" rx="1.200" fill="#e8f8ec"/><circle cx="343" cy="668" r="3.800" fill="#d8e8dc"/><rect x="350.950" y="656.550" width="15.500" height="15.500" rx="2" fill="#b98248"/><rect x="351.500" y="656.600" width="3" height="15.400" fill="#8a5c30"/><circle cx="360" cy="662.500" r="2.500" fill="#8f6234"/><path d="M355.500 669c1-3.500 8-3.500 9 0z" fill="#8f6234"/><rect x="370.950" y="656.550" width="15.500" height="15.500" rx="2.500" fill="#f4f4f2"/><path d="M371 659a2.500 2.500 0 0 1 2.500-2.500h10.500a2.500 2.500 0 0 1 2.500 2.500v2.300h-15.500z" fill="#e0574c"/>
<text x="374.3" y="669.46" font-size="7.2" fill="#555">23</text>
<rect x="390.950" y="656.550" width="15.500" height="15.500" rx="2" fill="#f7f4e4"/><rect x="391" y="656.600" width="15.500" height="4.200" fill="#f2ce55"/><path d="M392.500 664h12M392.500 666.500h12M392.500 669h12" stroke="#d8d4c4" stroke-width=".5"/><rect x="411.050" y="656.550" width="15.500" height="15.500" rx="2" fill="#f4f4f4"/><circle cx="414" cy="660.500" r="1" fill="#e8653a"/><circle cx="414" cy="664.300" r="1" fill="#3f8fe8"/><circle cx="414" cy="668" r="1" fill="#e8b03a"/><path d="M416.500 660.500h7M416.500 664.300h7M416.500 668h7" stroke="#bbb" stroke-width=".6"/><rect x="432.250" y="656.550" width="15.500" height="15.500" rx="2.500" fill="#e6e2d0"/><path d="M432.300 664l7 8h-4.500a2.500 2.500 0 0 1-2.500-2.500z" fill="#8fc87a"/><path d="M440 656.600h5l-3 15.400h-4z" fill="#f0d060"/><circle cx="443.500" cy="661" r="2.800" fill="#4a90e0"/><circle cx="446" cy="669" r="2.500" fill="#c8c8c8"/><circle cx="460.300" cy="664.300" r="8.400" fill="#f2f2f0"/><ellipse cx="463.900" cy="664.300" rx="3.400" ry="2" transform="rotate(0 463.90 664.30)" fill="#f5b83a" opacity=".9"/><ellipse cx="462.850" cy="666.850" rx="3.400" ry="2" transform="rotate(45 462.85 666.85)" fill="#f08a3a" opacity=".9"/><ellipse cx="460.300" cy="667.900" rx="3.400" ry="2" transform="rotate(90 460.30 667.90)" fill="#e8553f" opacity=".9"/><ellipse cx="457.750" cy="666.850" rx="3.400" ry="2" transform="rotate(135 457.75 666.85)" fill="#c85aa8" opacity=".9"/><ellipse cx="456.700" cy="664.300" rx="3.400" ry="2" transform="rotate(180 456.70 664.30)" fill="#7a6ad0" opacity=".9"/><ellipse cx="457.750" cy="661.750" rx="3.400" ry="2" transform="rotate(225 457.75 661.75)" fill="#4a98e0" opacity=".9"/><ellipse cx="460.300" cy="660.700" rx="3.400" ry="2" transform="rotate(270 460.30 660.70)" fill="#5ac0a0" opacity=".9"/><ellipse cx="462.850" cy="661.750" rx="3.400" ry="2" transform="rotate(315 462.85 661.75)" fill="#a8c84a" opacity=".9"/><circle cx="480.300" cy="664.300" r="8.300" fill="#3d97ee"/><ellipse cx="480.300" cy="663.800" rx="5" ry="4" fill="#eef6ff"/><path d="M477 666.500l-1 2.500 3-1.500z" fill="#eef6ff"/><circle cx="500.500" cy="664.300" r="0" fill="#3d4a44"/><ellipse cx="498.500" cy="662.500" rx="5.800" ry="4.800" fill="#5fc45a"/><ellipse cx="504" cy="667" rx="4.600" ry="3.800" fill="#dfe8dc"/><circle cx="506.500" cy="657.500" r="2.700" fill="#e8503f"/><circle cx="500" cy="677" r=".7" fill="#9ab"/><circle cx="520.700" cy="664.300" r="0" fill="#1d3040"/><circle cx="519.500" cy="664" r="6" fill="none" stroke="#3d97ee" stroke-width="2.600"/><circle cx="526" cy="668.500" r="2" fill="none" stroke="#e8a83a" stroke-width="1.200"/><circle cx="520" cy="677" r=".7" fill="#9ab"/><circle cx="540.800" cy="664.300" r="0" fill="#1a1a1a"/><ellipse cx="540.800" cy="664.800" rx="5" ry="7" fill="#151515"/><ellipse cx="540.800" cy="667" rx="3.200" ry="4" fill="#f4f4f4"/><path d="M536 664.500c-2.500 2-3 4-2.500 5.500M545.600 664.500c2.500 2 3 4 2.500 5.500" stroke="#151515" stroke-width="1.600" fill="none"/><path d="M536.500 663.500c2.500 1.500 6 1.500 8.600 0l-.5 2c-2.500 1-5.200 1-7.600 0z" fill="#d8382c"/><ellipse cx="538.500" cy="671.500" rx="2.400" ry="1" fill="#f0a020"/><ellipse cx="543.200" cy="671.500" rx="2.400" ry="1" fill="#f0a020"/><rect x="553.050" y="656.550" width="15.500" height="15.500" rx="3.500" fill="#d63a30"/><circle cx="560.800" cy="664.800" r="4.300" fill="none" stroke="#fff" stroke-width="1"/><circle cx="560.800" cy="664.800" r="1.600" fill="none" stroke="#fff" stroke-width=".9"/><path d="M561.500 660v5" stroke="#fff" stroke-width=".9"/><circle cx="581" cy="664.300" r="8.200" fill="#f4c838"/><circle cx="581" cy="664.300" r="6" fill="#2fb878"/><path d="M579.500 667.500v-6l4-1.200v5.500" stroke="#f8e060" stroke-width="1.100" fill="none"/><circle cx="578.500" cy="667.500" r="1.300" fill="#f8e060"/><circle cx="582.500" cy="666" r="1.300" fill="#f8e060"/><rect x="593.250" y="656.550" width="15.500" height="15.500" rx="3" fill="#e8553a"/><path d="M595.500 659l11 10.600M606.500 659l-11 10.600" stroke="#f8d8c8" stroke-width="1.600"/><circle cx="622" cy="664.300" r="8.200" fill="#2f8af0"/><path d="M618 669l4-8 4 8M619.500 666.500h5" stroke="#e8f2ff" stroke-width="1.200" fill="none"/><circle cx="628" cy="657.500" r="2.700" fill="#e8503f"/><rect x="634.0" y="656.3" width="16" height="16" rx="2" fill="#0c1c38"/><rect x="634.600" y="657" width="14.800" height="14.600" rx="1.500" fill="#0c1c38" stroke="#3fa8f0" stroke-width="1"/>
<text x="637.3" y="667.46" font-size="8" font-weight="500" fill="#7cc8ff">Ps</text>
<circle cx="662.300" cy="664.300" r="8.300" fill="#2f90e8"/><path d="M656.500 665h9.500c1.500 0 2.500-1 3-2-.8-.3-1.600-.2-2 .2-.2-1-.8-1.500-1.300-1.700-.5.800-.5 1.700 0 2.500h-9.500c0 3 2 5 5 5 3.500 0 5.500-2 6-4z" fill="#fff"/><rect x="658" y="661.500" width="1.800" height="1.500" fill="#fff"/><rect x="660.300" y="661.500" width="1.800" height="1.500" fill="#fff"/><rect x="662.600" y="661.500" width="1.800" height="1.500" fill="#fff"/><rect x="660.300" y="659.500" width="1.800" height="1.500" fill="#fff"/><rect x="677.5" y="658.8" width="11" height="11" rx="1" fill="#1a1a1a"/><path d="M675 660l8-4 8 4v9l-8 4-8-4z" fill="#e8405a"/><path d="M683 656l8 4v9l-8 4z" fill="#f08a30"/><path d="M675 669l8 4 8-4-8-3z" fill="#8a4ae0"/><rect x="678.500" y="660.500" width="8.500" height="8.500" fill="#111"/><rect x="680" y="667" width="3.500" height=".8" fill="#fff"/><circle cx="703.300" cy="664.300" r="8.200" fill="#8fc050"/><path d="M703.300 658.500v4M699 671l4.300-9 4.300 9M700.500 668h5.600" stroke="#f4f8f0" stroke-width="1.100" fill="none"/><circle cx="703.300" cy="659" r="1.500" fill="#3a4a40"/><rect x="715.8" y="656.8" width="15" height="15" rx="1.500" fill="#3a3f4a"/><rect x="716.300" y="657.300" width="14" height="12" fill="#2a2e38" stroke="#9aa0aa" stroke-width=".9"/>
<text x="719.5" y="665.53" font-size="5.5" font-weight="500" fill="#b8c0d0">&lt;&gt;</text>
<circle cx="743" cy="664.300" r="0" fill="none"/><path d="M748.500 657.500l-8 7 8 7 2.500-1.200v-11.600zM740.500 664.500l-3.500-3-1.500 1 2.500 2-2.500 2 1.500 1z" fill="#2f9af0"/><path d="M748.500 661.500l-4 3 4 3z" fill="#15292d"/><circle cx="743" cy="677" r=".7" fill="#9ab"/><circle cx="762.500" cy="664.300" r="0" fill="none"/><path d="M762.500 656.500l3.800 11-1 4.800h-5.600l-1-4.800z" fill="#e89a4a"/><path d="M762.500 656.500l1.700 5h-3.400z" fill="#f0e0c0"/><path d="M759.500 667.500h6.500l-.8 4.800h-5z" fill="#d84838"/><path d="M761.700 659l.8-2.500.8 2.500z" fill="#444"/><rect x="774.950" y="656.550" width="15.500" height="15.500" rx="2.500" fill="#f2f6fa"/><circle cx="782.700" cy="664.300" r="6" fill="#1f78e0"/><path d="M777.500 664.300l3-2v1.300h4.400v-1.300l3 2-3 2v-1.300h-4.400v1.300z" fill="#fff"/><circle cx="802.500" cy="664.300" r="0" fill="none"/><path d="M802.500 655.500l2.500 5.800 6.300.6-4.800 4.200 1.500 6.200-5.500-3.300-5.500 3.300 1.500-6.200-4.800-4.200 6.300-.6z" fill="#8a5ae0"/><path d="M802.500 659l1.500 3.500 3.800.4-2.900 2.500.9 3.700-3.300-2-3.300 2 .9-3.700-2.900-2.500 3.800-.4z" fill="#c8b0f8"/><rect x="799.500" y="662.500" width="4.500" height="3.300" rx=".6" fill="#3a2a6a"/><rect x="817.250" y="658.550" width="11.500" height="11.500" rx="1" fill="#1a1a1a"/><path d="M815 657h10l6 6v8.500h-10l-6-6z" fill="#21d789"/><path d="M825 657l6 6v-6z" fill="#fcf84a"/><path d="M815 665.500l6 6h-6z" fill="#07c3f2"/><rect x="817.800" y="659.300" width="10" height="10" fill="#111"/>
<text x="818.8" y="665.37" font-size="5.6" font-weight="700" fill="#fff">PC</text>
<rect x="836.050" y="657.050" width="14.500" height="14.500" rx="2.500" fill="#3f8fe0"/><path d="M838 670l6-11M848.500 670l-6-11M837.500 667h11.500" stroke="#a8d0f8" stroke-width="1"/><path d="M847 656l3.500 3.500-1.200 1.200-3.500-3.500z" fill="#c8ccd0"/><circle cx="864" cy="664.300" r="0" fill="none"/><path d="M864 656l7.800 2.600c0 6.500-2.500 11-7.800 13.800-5.300-2.800-7.800-7.300-7.800-13.800z" fill="#2a86e8"/><path d="M860 662c1.500 3.500 5.500 4.500 8.500 1.500-1 4-5 5.500-8.500 3.500z" fill="#d8ecff"/><rect x="876.0" y="656.3" width="16" height="16" rx="3" fill="#2f86f0"/><path d="M877.500 668.500l3.800-6 2.700 3.500 2.700-3.500 3.800 6z" fill="#fff"/><circle cx="884" cy="677" r=".7" fill="#9ab"/><rect x="896.3" y="656.3" width="16" height="16" rx="1.500" fill="#101418"/><rect x="896.800" y="657" width="15" height="14.600" rx="1" fill="#0e1216" stroke="#5a6068" stroke-width=".8"/><path d="M899 660.500h8M899 663.500h10M899 666.500h5" stroke="#5fb0e8" stroke-width=".9"/><circle cx="904" cy="677" r=".7" fill="#9ab"/><rect x="916.3" y="656.3" width="16" height="16" rx="1.500" fill="#141a18"/><rect x="916.800" y="657" width="15" height="14.600" rx="1" fill="#1a201e" stroke="#3a4240" stroke-width=".8"/>
<text x="918.8" y="663.16" font-size="4.5" font-weight="700" fill="#4fd070">$▯</text>
<circle cx="924" cy="677" r=".7" fill="#9ab"/><rect x="939" y="656.500" width=".8" height="17.500" fill="#3a5054"/><circle cx="953.300" cy="664.300" r="8" fill="#2f8ef0"/><path d="M948.500 660.500l9.500 2.500-3 2 .5 3.500-2.500-2-3 2.500 1.500-4z" fill="#eaf4ff"/><circle cx="953" cy="677" r=".7" fill="#9ab"/><circle cx="974" cy="664.300" r="8" fill="#e4ecf8"/><circle cx="974" cy="664.300" r="7" fill="#3a6ee8"/><path d="M969 662l8-2.500-1.500 3.500 3.500 1.500-6.500 4 1-3.500z" fill="#d8f0ff"/><rect x="989" y="656.500" width=".8" height="17.500" fill="#3a5054"/><rect x="996.450" y="657.050" width="14.500" height="14.500" rx="1" fill="#eceee8"/><rect x="996.500" y="658" width="14.400" height="12.500" fill="#f2f2ee"/><rect x="1006" y="666" width="4" height="4" fill="#5fc870"/><rect x="1007" y="659" width="3" height="2" fill="#5a4a3a"/><path d="M998 661h6M998 663.500h5M998 666h6" stroke="#bbb" stroke-width=".5"/><path d="M1017 659.500h12.500l-1.300 13h-9.900z" fill="#aab4b6" opacity=".85"/><ellipse cx="1023.200" cy="659.500" rx="6.300" ry="1.800" fill="#c8d0d2"/><path d="M1020 661v10M1023.200 661.500v10M1026.500 661v10" stroke="#8a9698" stroke-width=".5"/><path d="M371.500 116h457.500v17.500a3.500 3.500 0 0 1-3.500 3.500h-450.500a3.500 3.500 0 0 1-3.500-3.500z" fill="#f5f5f5"/><path d="M371.500 116h457.500v17.500a3.500 3.500 0 0 1-3.500 3.500h-450.500a3.500 3.500 0 0 1-3.500-3.500z" fill="none" stroke="#c8c8c8" stroke-width=".5"/><rect x="379.800" y="120.800" width="74.200" height="11.500" rx="1" fill="#ef5b3c"/>
<text x="408.6" y="128.77" font-size="5.6" font-weight="700" fill="#fff">直播中</text>
<circle cx="465.800" cy="126.700" r="1.400" fill="#e0453a"/>
<text x="478.3" y="129.92" font-size="8.7" fill="#6a6a6a">00:06:37</text>
<circle cx="537.500" cy="125.500" r="4.200" fill="none" stroke="#8a8a8a" stroke-width=".8"/><circle cx="537.500" cy="125.500" r="1.700" fill="none" stroke="#8a8a8a" stroke-width=".7"/><path d="M534 131.500c2-1.200 5-1.200 7 0" stroke="#8a8a8a" stroke-width=".8" fill="none"/>
<text x="546" y="129.59" font-size="7.8" fill="#555">露脸</text>
<rect x="585" y="121.500" width="10.500" height="7.500" rx=".8" fill="none" stroke="#8a8a8a" stroke-width=".8"/><path d="M584 131h12.500" stroke="#8a8a8a" stroke-width=".8"/><path d="M588 124.500h4l1 1.500" stroke="#8a8a8a" stroke-width=".6" fill="none"/>
<text x="599" y="129.59" font-size="7.8" fill="#555">白板</text>
<path d="M646.500 121.500h9.800v7h-6.300l-1.800 2v-2h-1.700z" fill="none" stroke="#8a8a8a" stroke-width=".8"/><circle cx="649.300" cy="125" r=".5" fill="#8a8a8a"/><circle cx="651.400" cy="125" r=".5" fill="#8a8a8a"/><circle cx="653.500" cy="125" r=".5" fill="#8a8a8a"/>
<text x="660.3" y="129.59" font-size="7.8" fill="#555">消息</text>
<rect x="700.600" y="118.800" width="49.800" height="15.800" rx="2" fill="#fff" stroke="#f0623f" stroke-width=".7"/>
<text x="709.5" y="129.66" font-size="8" font-weight="700" fill="#e8452c">结束连麦</text>
<rect x="768" y="121.2" width="4.600" height="4.600" rx=".6" fill="none" stroke="#b0b0b0" stroke-width=".7"/><rect x="768" y="127.2" width="4.600" height="4.600" rx=".6" fill="none" stroke="#b0b0b0" stroke-width=".7"/><rect x="774" y="121.2" width="4.600" height="4.600" rx=".6" fill="none" stroke="#b0b0b0" stroke-width=".7"/><rect x="774" y="127.2" width="4.600" height="4.600" rx=".6" fill="none" stroke="#b0b0b0" stroke-width=".7"/>
<text x="782.7" y="129.62" font-size="7.9" fill="#666">切换模式</text>
</g></g></svg></div>
<svg id="ui" width="1200" height="735" viewBox="0 0 1200 735"><defs><filter id="pblur" x="-2%" y="-2%" width="104%" height="104%"><feGaussianBlur stdDeviation=".45"/></filter></defs><g filter="url(#pblur)"><rect x="869.800" y="449.800" width="284.600" height="169" fill="#000"/><defs><linearGradient id="pd" x1="0" x2="1"><stop offset="0" stop-color="#0c0e10"/><stop offset=".3" stop-color="#16191c"/><stop offset=".45" stop-color="#0a0b0d"/><stop offset=".7" stop-color="#121417"/><stop offset="1" stop-color="#08090a"/></linearGradient></defs><rect x="885" y="450" width="269.400" height="168.500" fill="#0b0c0e"/><rect x="1060" y="450" width="94.400" height="168.500" fill="url(#pd)"/><rect x="885" y="450" width="269.400" height="4.300" fill="#a8acae"/><rect x="889" y="451.200" width="2.500" height="1.900" fill="#1a1c1e" opacity=".85"/><rect x="894" y="451.200" width="5" height="1.900" fill="#1a1c1e" opacity=".85"/><rect x="901" y="451.200" width="5" height="1.900" fill="#1a1c1e" opacity=".85"/><rect x="908" y="451.200" width="5" height="1.900" fill="#1a1c1e" opacity=".85"/><rect x="915" y="451.200" width="5" height="1.900" fill="#1a1c1e" opacity=".85"/><rect x="922" y="451.200" width="5" height="1.900" fill="#1a1c1e" opacity=".85"/><rect x="929" y="451.200" width="6" height="1.900" fill="#1a1c1e" opacity=".85"/><rect x="1062" y="451.200" width="3" height="1.900" fill="#1a1c1e" opacity=".75"/><rect x="1068" y="451.200" width="3" height="1.900" fill="#1a1c1e" opacity=".75"/><rect x="1074" y="451.200" width="3" height="1.900" fill="#1a1c1e" opacity=".75"/><rect x="1080" y="451.200" width="3" height="1.900" fill="#1a1c1e" opacity=".75"/><rect x="1087" y="451.200" width="8" height="1.900" fill="#1a1c1e" opacity=".75"/><rect x="1098" y="451.200" width="14" height="1.900" fill="#1a1c1e" opacity=".75"/><rect x="1116" y="451.200" width="12" height="1.900" fill="#1a1c1e" opacity=".75"/><rect x="1132" y="451.200" width="3" height="1.900" fill="#1a1c1e" opacity=".75"/><rect x="1138" y="451.200" width="3" height="1.900" fill="#1a1c1e" opacity=".75"/><rect x="1145" y="451.200" width="5" height="1.900" fill="#1a1c1e" opacity=".75"/><rect x="885" y="454.300" width="175.300" height="14" fill="#101214"/><rect x="885" y="468" width="175.300" height="140.500" fill="#eef2f7"/><rect x="885" y="468" width="44.500" height="140.500" fill="#fdfdfd"/><path d="M903.800 458.300h3.600l1 1.200h5.400v7.700h-10z" fill="#6cc0f2"/><rect x="887" y="473" width="8" height="1.600" fill="#999"/><circle cx="934" cy="474" r="3.600" fill="#c8382c"/><circle cx="934" cy="473.500" r="1.800" fill="#f0d0c0"/><rect x="887" y="482.300" width="31" height="1.700" fill="#f0a040" opacity=".85"/><rect x="888" y="488.500" width="18" height="1.200" fill="#ccc"/><rect x="931" y="482" width="12" height="2" fill="#a8c8f0" opacity=".7"/><circle cx="888.500" cy="499.500" r="3.700" fill="#5a9ae8"/><rect x="894" y="496.5" width="22" height="1.900" fill="#2a2a2a" opacity=".85"/><rect x="894" y="500.8" width="24" height="1.300" fill="#a8a8a8" opacity=".8"/><rect x="922" y="496.9" width="4.500" height="1" fill="#bbb" opacity=".7"/><circle cx="888.500" cy="512.0" r="3.700" fill="#e8c8a0"/><rect x="894" y="509.0" width="20" height="1.900" fill="#2a2a2a" opacity=".85"/><rect x="894" y="513.3" width="26" height="1.300" fill="#a8a8a8" opacity=".8"/><rect x="922" y="509.4" width="4.500" height="1" fill="#bbb" opacity=".7"/><circle cx="888.500" cy="524.500" r="3.700" fill="#4a78c8"/><rect x="894" y="521.5" width="7" height="1.900" fill="#2a2a2a" opacity=".85"/><rect x="894" y="525.8" width="10" height="1.300" fill="#a8a8a8" opacity=".8"/><rect x="922" y="521.9" width="4.500" height="1" fill="#bbb" opacity=".7"/><circle cx="888.500" cy="537.0" r="3.700" fill="#1a2a5a"/><rect x="894" y="534.0" width="26" height="1.900" fill="#2a2a2a" opacity=".85"/><rect x="894" y="538.3" width="28" height="1.300" fill="#a8a8a8" opacity=".8"/><rect x="922" y="534.4" width="4.500" height="1" fill="#bbb" opacity=".7"/><circle cx="888.500" cy="549.500" r="3.700" fill="#c8b8a8"/><rect x="894" y="546.5" width="21" height="1.900" fill="#2a2a2a" opacity=".85"/><rect x="894" y="550.8" width="8" height="1.300" fill="#a8a8a8" opacity=".8"/><rect x="922" y="546.9" width="4.500" height="1" fill="#bbb" opacity=".7"/><rect x="885" y="556.0" width="44.500" height="12.300" fill="#e9edf2"/><circle cx="888.500" cy="562.0" r="3.700" fill="#d04030"/><rect x="894" y="559.0" width="13" height="1.900" fill="#2a2a2a" opacity=".85"/><rect x="922" y="559.4" width="4.500" height="1" fill="#bbb" opacity=".7"/><circle cx="888.500" cy="574.500" r="3.700" fill="#b8905a"/><rect x="894" y="571.5" width="9" height="1.900" fill="#2a2a2a" opacity=".85"/><rect x="894" y="575.8" width="26" height="1.300" fill="#a8a8a8" opacity=".8"/><rect x="922" y="571.9" width="4.500" height="1" fill="#bbb" opacity=".7"/><circle cx="888.500" cy="587.0" r="3.700" fill="#2f86f0"/><rect x="894" y="584.0" width="5" height="1.900" fill="#2a2a2a" opacity=".85"/><rect x="894" y="588.3" width="16" height="1.300" fill="#a8a8a8" opacity=".8"/><rect x="922" y="584.4" width="4.500" height="1" fill="#bbb" opacity=".7"/><circle cx="888.500" cy="599.500" r="3.700" fill="#3ab878"/><rect x="894" y="596.5" width="10" height="1.900" fill="#2a2a2a" opacity=".85"/><rect x="894" y="600.8" width="27" height="1.300" fill="#a8a8a8" opacity=".8"/><rect x="922" y="596.9" width="4.500" height="1" fill="#bbb" opacity=".7"/><rect x="895" y="508" width="6" height="1.500" fill="#f0a830"/><rect x="895" y="546" width="6" height="1.500" fill="#f0a830"/><rect x="916" y="496" width="1.600" height="1.600" fill="#3ab878"/><rect x="929.500" y="573" width="130.800" height="35" fill="#f7f8fa"/><rect x="933.5" y="580.300" width="3.200" height="2" fill="#8a8f98" opacity=".75"/><rect x="940.1" y="580.300" width="3.200" height="2" fill="#8a8f98" opacity=".75"/><rect x="946.7" y="580.300" width="3.200" height="2" fill="#8a8f98" opacity=".75"/><rect x="953.3" y="580.300" width="3.200" height="2" fill="#8a8f98" opacity=".75"/><rect x="959.9" y="580.300" width="3.200" height="2" fill="#8a8f98" opacity=".75"/><rect x="966.5" y="580.300" width="3.200" height="2" fill="#8a8f98" opacity=".75"/><rect x="973.1" y="580.300" width="3.200" height="2" fill="#8a8f98" opacity=".75"/><rect x="979.7" y="580.300" width="3.200" height="2" fill="#8a8f98" opacity=".75"/><rect x="986.3" y="580.300" width="3.200" height="2" fill="#8a8f98" opacity=".75"/><rect x="1043" y="580.300" width="3" height="2" fill="#8a8f98" opacity=".7"/><rect x="934" y="588" width="10" height="1.500" fill="#aaa"/><rect x="1014" y="602" width="18" height="1.400" fill="#bbb"/><rect x="1035" y="600.300" width="10.500" height="4.600" rx="1" fill="#fff" stroke="#ddd" stroke-width=".4"/><rect x="940.600" y="457.600" width="201" height="111.600" rx="1.500" fill="#2e2f33"/><rect x="940.600" y="457.600" width="201" height="4" rx="1.500" fill="#3a3b3f"/><circle cx="943.300" cy="459.600" r=".8" fill="#ec6a5e"/><circle cx="946" cy="459.600" r=".8" fill="#f0bd4d"/><circle cx="948.700" cy="459.600" r=".8" fill="#5fc353"/><rect x="1024" y="458.700" width="36" height="1.700" fill="#9a9a9e" opacity=".8"/><rect x="945" y="464.300" width="5.5" height="3.600" rx=".6" fill="#d8d8dc" opacity="0.95"/><rect x="944.5" y="469.700" width="7.0" height="1.300" fill="#8a8a90" opacity=".7"/><rect x="955.5" y="464.300" width="5.5" height="3.600" rx=".6" fill="#d8d8dc" opacity="0.5"/><rect x="955.0" y="469.700" width="7.0" height="1.300" fill="#8a8a90" opacity=".7"/><rect x="966" y="464.300" width="5.5" height="3.600" rx=".6" fill="#d8d8dc" opacity="0.5"/><rect x="965.5" y="469.700" width="7.0" height="1.300" fill="#8a8a90" opacity=".7"/><rect x="977" y="464.300" width="4.5" height="3.600" rx=".6" fill="#d8d8dc" opacity="0.5"/><rect x="976.5" y="469.700" width="6.0" height="1.300" fill="#8a8a90" opacity=".7"/><rect x="987" y="464.300" width="5.5" height="3.600" rx=".6" fill="#d8d8dc" opacity="0.5"/><rect x="986.5" y="469.700" width="7.0" height="1.300" fill="#8a8a90" opacity=".7"/><rect x="1009.5" y="464.300" width="5" height="3.600" rx=".6" fill="#d8d8dc" opacity="0.5"/><rect x="1009.0" y="469.700" width="6.5" height="1.300" fill="#8a8a90" opacity=".7"/><rect x="1043" y="465.500" width="16" height="4" rx="1" fill="#45464b"/><rect x="1046" y="466.800" width="10" height="1.500" fill="#c8c8cc"/><rect x="1062" y="465.500" width="9" height="4" rx="1" fill="#45464b"/><rect x="1064" y="466.800" width="5" height="1.500" fill="#c8c8cc"/><rect x="1073.500" y="464.800" width="16.500" height="5.400" rx="2.700" fill="#ee5a3a"/><rect x="1077" y="466.800" width="9.500" height="1.500" fill="#ffd8c8"/><rect x="940.600" y="473.600" width="133.400" height="86.600" fill="#000"/><rect x="942" y="476.300" width="9" height="3" fill="#ee5a3a"/><rect x="952" y="477" width="10" height="1.500" fill="#ddd" opacity=".8"/><rect x="960" y="480" width="114" height="73" fill="#0b2a30"/><use href="#vg" transform="translate(960,480) scale(.12667) translate(-150,-116)"/><rect x="1045" y="525" width="43.500" height="32.500" fill="#1c1d20" stroke="#4a4a4e" stroke-width=".4"/><rect x="1047.500" y="529" width="20" height="24" fill="#eef1f5"/><rect x="1047.500" y="529" width="5" height="24" fill="#fcfcfc"/><rect x="1055.500" y="530.500" width="30.500" height="17.500" fill="#2e2f33"/><rect x="1060" y="533.500" width="14.500" height="9" fill="#f4f4f4"/><rect x="1071" y="538" width="6.500" height="5" fill="#222"/><rect x="1079" y="531.500" width="6" height="15" fill="#26272a"/><rect x="1056" y="550.500" width="24" height="1.600" fill="#4a7ab8" opacity=".8"/><rect x="944.500" y="563.800" width="1" height="3" fill="#bbb"/><rect x="949" y="564.500" width="8" height="1.500" fill="#a0a0a4" opacity=".8"/><rect x="961" y="564" width="2" height="2.500" fill="#3aa870"/><rect x="964.500" y="564.500" width="7.500" height="1.500" fill="#a0a0a4" opacity=".8"/><rect x="976" y="564.200" width="1" height="2.300" fill="#aaa"/><rect x="978" y="564.200" width="1" height="2.300" fill="#aaa"/><rect x="980.500" y="564.500" width="4" height="1.500" fill="#a0a0a4" opacity=".8"/><rect x="1092.500" y="461.600" width="49" height="107.600" fill="#2a2b2f"/><rect x="1092.500" y="461.600" width="49" height="14.500" fill="#2e2f33"/><rect x="1104" y="464.800" width="7.500" height="2.800" fill="#eee"/><rect x="1122" y="464.800" width="10" height="2.800" fill="#eee"/><rect x="1103" y="470.200" width="9" height="1.300" fill="#8a8a90"/><rect x="1124" y="470.200" width="6" height="1.300" fill="#8a8a90"/><rect x="1098" y="477" width="5" height="2" fill="#8a8a90"/><rect x="1113" y="477" width="7" height="2" fill="#ddd"/><rect x="1129" y="477" width="4" height="2" fill="#8a8a90"/><rect x="1135" y="477" width="2" height="2" fill="#8a8a90"/><rect x="1106" y="481.300" width="22" height=".6" fill="#5a9ae8" opacity=".6"/><rect x="1097.500" y="484.500" width="5.500" height="7" fill="#f0f0f0"/><rect x="1097.500" y="486.500" width="2.500" height="5" fill="#c83a30"/><rect x="1105.500" y="485.300" width="5" height="1.800" fill="#ddd"/><rect x="1105.500" y="489" width="4" height="1.200" fill="#888"/><rect x="1129" y="486" width="8.500" height="4.300" rx=".8" fill="#ee5a3a"/><rect x="1094" y="562.300" width="46" height="5" rx="1" fill="#3a3b40"/><rect x="1109" y="564" width="16" height="1.500" fill="#c8c8cc"/><rect x="937.500" y="608.500" width="164" height="10" rx="1" fill="#20343a"/><rect x="940.0" y="609.800" width="6.600" height="6.800" rx="1" fill="#3f93e8"/><rect x="948.1" y="609.800" width="6.600" height="6.800" rx="1" fill="#444a50"/><rect x="956.2" y="609.800" width="6.600" height="6.800" rx="1" fill="#c8ccd0"/><rect x="964.3" y="609.800" width="6.600" height="6.800" rx="1" fill="#e8503f"/><rect x="972.4" y="609.800" width="6.600" height="6.800" rx="1" fill="#1a1a1a"/><rect x="980.5" y="609.800" width="6.600" height="6.800" rx="1" fill="#5fc45a"/><rect x="988.6" y="609.800" width="6.600" height="6.800" rx="1" fill="#111"/><rect x="996.7" y="609.800" width="6.600" height="6.800" rx="1" fill="#1a2a68"/><rect x="1004.8" y="609.800" width="6.600" height="6.800" rx="1" fill="#8a5ae0"/><rect x="1012.9" y="609.800" width="6.600" height="6.800" rx="1" fill="#3f8fe0"/><rect x="1021.0" y="609.800" width="6.600" height="6.800" rx="1" fill="#e8a83a"/><rect x="1029.1" y="609.800" width="6.600" height="6.800" rx="1" fill="#2f9af0"/><rect x="1037.2" y="609.800" width="6.600" height="6.800" rx="1" fill="#3a9ae8"/><rect x="1045.3" y="609.800" width="6.600" height="6.800" rx="1" fill="#2f9af0"/><rect x="1053.4" y="609.800" width="6.600" height="6.800" rx="1" fill="#3a6ea8"/><rect x="1061.5" y="609.800" width="6.600" height="6.800" rx="1" fill="#2a3a48"/><rect x="1069.6" y="609.800" width="6.600" height="6.800" rx="1" fill="#2f7de0"/><rect x="1082" y="609.800" width="7.500" height="6.500" rx=".8" fill="#4aa8f0"/><path d="M1092.500 610h6l-.6 7h-4.800z" fill="#c8d0d2"/></g>
<text x="37.3" y="38.2" font-size="20.1" font-weight="300" fill="#2d2d2d">信息学院学长导航系列讲座：就业经验分享群直播</text>
<g fill="none" stroke="#6b7783" stroke-width="1.5">
<path d="M1018.2 29v-3.800a1.500 1.500 0 0 0-1.500-1.500h-10.500a1.500 1.500 0 0 0-1.500 1.500v9.600a1.500 1.500 0 0 0 1.500 1.500h6.500M1004.700 26.900h13.500"/>
<path d="M1012.800 29.900h4.200l1.300 3.700h-6.800zM1014.900 33.600v3.600" stroke-width="1.200"/>
<path d="M1052 21.900h-8.200v7.600M1044.300 22.400l6.200 6.200M1053 39h8.300v-8M1060.800 38.500l-6.300-6.300" stroke-width="1.700"/>
<path d="M1086 30.200h15"/>
<rect x="1130.700" y="24.200" width="11" height="11" rx="2"/>
<path d="M1170.500 24.500l12 12M1182.500 24.500l-12 12"/>
</g>
<text x="19.3" y="91.7" font-size="18.15" font-weight="300" fill="#fff">信息学院学长导航就业经验分享会</text>
<rect x="20" y="105" width="45" height="20" rx="2.500" fill="#ee5644"/>
<text x="23.5" y="119.3" font-size="12.6" fill="#fff">直播中</text>
<text x="140.3" y="118.7" font-size="15.5" fill="#fff">175</text>
<text x="170.3" y="118.7" font-size="15.2" fill="#fff">人观看</text>
<text x="966" y="84.5" font-size="15" fill="#fff">结束</text>
<text x="1021" y="84.5" font-size="15" fill="#fff">群直播介绍</text>
<text x="1120" y="84.5" font-size="15" fill="#fff">举报</text>
<path d="M1007.500 71v16M1107.500 71v16" stroke="#fff" stroke-width="1"/><g fill="#fff"><path d="M107 124c0-4 3-5.500 7-7 1.500-.6 1.600-2 .5-3.200-1.500-1.800-2-3.500-2-5.300 0-2.500 1.800-4.500 4.500-4.500s4.500 2 4.500 4.500c0 1.800-.5 3.500-2 5.300-1.100 1.200-1 2.600.5 3.200 4 1.500 7 3 7 7z"/>
<path d="M126.600 107.800c1.800 0 3 1.400 3 3.100 0 1.300-.4 2.400-1.300 3.500-.7.8-.6 1.700.3 2.100 2.400.9 3.800 1.700 3.800 4.300h-5.400c-.6-1.700-2-2.700-4.200-3.600.9-1.200.6-1.700 1.400-2.600-.7-1-1-2.200-.9-3.700.1-1.700 1.500-3.100 3.300-3.100z" opacity=".92"/></g><rect x="-10" y="420" width="470" height="31" rx="4" fill="#000" fill-opacity=".4"/><rect x="-10" y="582.500" width="242" height="34" rx="5" fill="#000" fill-opacity=".4"/>
<text x="23.5" y="438.5" font-size="19" font-weight="300" fill="#fff">手</text>
<text x="23.5" y="480" font-size="19" font-weight="300" fill="#3d9cff">憨憨</text>
<text x="66.5" y="480" font-size="19" font-weight="300" fill="#fff">:</text>
<text x="77" y="480" font-size="19" font-weight="300" fill="#fff">这个</text>
<text x="23.5" y="521.5" font-size="19" font-weight="300" fill="#3d9cff">憨憨</text>
<text x="66.5" y="521.5" font-size="19" font-weight="300" fill="#fff">:</text>
<text x="77" y="521.5" font-size="19" font-weight="300" fill="#fff">这里</text>
<text x="23.5" y="563" font-size="19" font-weight="300" fill="#3d9cff">江铮</text>
<text x="66.5" y="563" font-size="19" font-weight="300" fill="#fff">:</text>
<text x="77" y="563" font-size="19" font-weight="300" fill="#fff">[图片]</text>
<text x="23.5" y="604.5" font-size="19" font-weight="300" fill="#3d9cff">江铮</text>
<text x="66.5" y="604.5" font-size="19" font-weight="300" fill="#fff">:</text>
<text x="77" y="604.5" font-size="19" font-weight="300" fill="#fff">你自己主动发起吧</text>
<g fill="none" stroke="#2a2a2a" stroke-width="1">
<circle cx="45" cy="682" r="26"/><circle cx="114" cy="682" r="26"/>
<rect x="156.500" y="655.500" width="82" height="54" rx="27"/>
<rect x="257.500" y="655.500" width="377" height="54" rx="27"/>
<circle cx="1073" cy="684" r="26"/><circle cx="1145" cy="684" r="26"/></g>
<text x="169" y="686.3" font-size="15.8" fill="#fff">超清</text>
<path d="M212.500 690h9l-4.500 4.500z" fill="#fff"/>
<text x="278.3" y="687.3" font-size="18" font-weight="300" fill="#fff">说点什么</text>
<text x="351" y="687.3" font-size="18" font-weight="300" fill="#fff">...</text>
<text x="575.5" y="689.5" font-size="19" font-weight="300" fill="#fff">发送</text>
<defs><linearGradient id="lg" x1="0" x2="1"><stop offset="0" stop-color="#3f86ff"/><stop offset="1" stop-color="#5a63f8"/></linearGradient></defs><rect x="1096" y="632" width="75" height="26" rx="2.500" fill="url(#lg)"/>
<text x="1105" y="650.3" font-size="16" fill="#fff">赞</text>
<text x="1127.2" y="650.3" font-size="16" fill="#fff">1424</text>
<g fill="none" stroke="#fff" stroke-width="2" stroke-linejoin="round" stroke-linecap="round">
<path d="M57 679.500v-7h-25v18.500h13"/><path d="M36.500 676h16.500M40.500 681h9.500M36.500 685.500h9.500" stroke-width="1.700"/><path d="M36 681h1.800" stroke-width="1.700"/>
<circle cx="54" cy="688" r="6" stroke-width="1.900"/><path d="M51.300 688l2 2 3.300-3.600" stroke-width="1.600"/>
<rect x="102.500" y="678" width="20" height="14.500" rx="1"/>
<path d="M127.300 682.300c-.8-5.500-5-10.500-12.300-11.500M118.300 667.800l-3.800 2.800 3.200 3.600"/>
</g><g fill="none" stroke="#fff" stroke-width="2.200" stroke-linejoin="round" stroke-linecap="round">
<path d="M1061.900 686.400A6.700 6.700 0 0 1 1067 675.400H1073A6.700 6.700 0 0 1 1073 688.800H1068"/>
<path d="M1079 680.900H1072.500A6.900 6.900 0 0 0 1072.500 694.700H1078.700A6.900 6.900 0 0 0 1084 683.400"/>
<rect x="1133" y="681" width="5.500" height="15" rx="1"/>
<path d="M1141.500 696v-14c3.500-2 5.500-5.500 5.500-9 3.500 0 4.500 3 3 8h5.500c2 0 3 1.500 2.500 3.500l-2.500 9.500c-.5 1.500-1.500 2-3 2z"/>
</g><path d="M1200 731.500a3.500 3.500 0 0 1-3.500 3.500h3.500z" fill="#fff"/><path d="M0 0h3.200a3.200 3.200 0 0 0-3.200 3.200z" fill="#000"/><path d="M0 4.300a4.300 4.300 0 0 1 4.300-4.300" fill="none" stroke="#fff" stroke-width="1"/></svg>
</body></html>
